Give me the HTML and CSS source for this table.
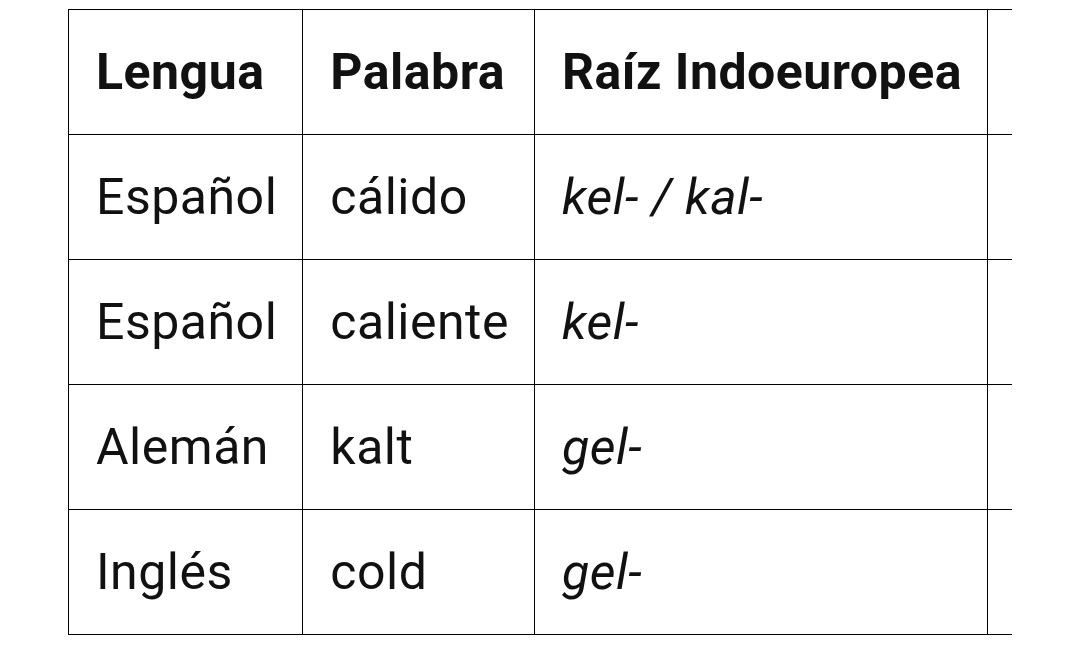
FILE: index.html
```html
<!DOCTYPE html>
<html lang="es">
<head>
<meta charset="utf-8">
<link rel="stylesheet" href="styles.css">
</head>
<body>
<div class="wrap">
  <table class="roots">
    <thead>
      <tr><th>Lengua</th><th>Palabra</th><th>Raíz Indoeuropea</th><th class="extra"></th></tr>
    </thead>
    <tbody>
      <tr><td>Español</td><td>cálido</td><td><em>kel- / kal-</em></td><td class="extra"></td></tr>
      <tr><td>Español</td><td>caliente</td><td><em>kel-</em></td><td class="extra"></td></tr>
      <tr><td>Alemán</td><td>kalt</td><td><em>gel-</em></td><td class="extra"></td></tr>
      <tr><td>Inglés</td><td>cold</td><td><em>gel-</em></td><td class="extra"></td></tr>
    </tbody>
  </table>
</div>
</body>
</html>
```
FILE: styles.css
```css
html, body {
  margin: 0;
  padding: 0;
  background: #ffffff;
}
body {
  font-family: Roboto, "Noto Sans", sans-serif;
  color: #111111;
}
.wrap {
  margin: 9px 0 0 68px;
  width: 944px;
  overflow: hidden;
}
.roots {
  border-collapse: collapse;
  font-size: 50px;
  line-height: 68px;
  letter-spacing: 0.5px;
}
.roots th,
.roots td {
  border: 1px solid #000000;
  padding: 28px 25px 28px 27px;
  text-align: left;
  white-space: nowrap;
}
.roots th {
  font-weight: 700;
}
.roots em {
  font-style: italic;
}
.roots .extra {
  min-width: 300px;
  width: 300px;
}
```
